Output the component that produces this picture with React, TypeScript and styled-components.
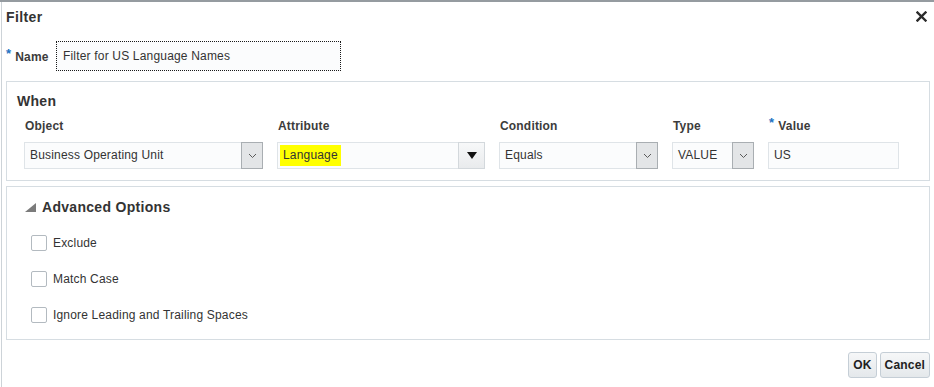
import React from 'react';
import styled, { createGlobalStyle } from 'styled-components';

const Global = createGlobalStyle`
  html, body {
    margin: 0;
    padding: 0;
    background: #ffffff;
  }
  body {
    font-family: "Liberation Sans", Arial, sans-serif;
    font-size: 12px;
    letter-spacing: 0.18px;
    color: #333333;
  }
  * {
    box-sizing: border-box;
  }
`

const Color = {
  Text: '#333333',
  Label: '#3c3c3c',
  Border: '#d6dde2',
  FieldBorder: '#dfe4e8',
  FieldBg: '#fbfcfd',
  Required: '#2372c2',
}

type Column = {
  label: string,
  required?: boolean,
  value: string,
  width: number,
  arrow?: 'chevron' | 'solid' | 'none',
  highlight?: boolean,
}

const columns: Column[] = [
  { label: 'Object', value: 'Business Operating Unit', width: 239, arrow: 'chevron' },
  { label: 'Attribute', value: 'Language', width: 208, arrow: 'solid', highlight: true },
  { label: 'Condition', value: 'Equals', width: 159, arrow: 'chevron' },
  { label: 'Type', value: 'VALUE', width: 82, arrow: 'chevron' },
  { label: 'Value', value: 'US', width: 131, arrow: 'none', required: true },
]

const options = ['Exclude', 'Match Case', 'Ignore Leading and Trailing Spaces']

const Chevron = () => (
  <svg width="9" height="6" viewBox="0 0 9 6">
    <polyline points="1,1 4.5,4.5 8,1" fill="none" stroke="#5a5a5a" strokeWidth="1" />
  </svg>
)

const SolidArrow = () => (
  <svg width="10" height="7" viewBox="0 0 10 7">
    <polygon points="0,0 10,0 5,7" fill="#111111" />
  </svg>
)

const CloseIcon = () => (
  <svg width="11" height="11" viewBox="0 0 11 11">
    <path d="M1.5 1.5 L9.5 9.5 M9.5 1.5 L1.5 9.5" stroke="#2b2b2b" strokeWidth="2.4" strokeLinecap="square" />
  </svg>
)

const Disclosure = () => (
  <svg width="11" height="9" viewBox="0 0 11 9">
    <polygon points="11,0 11,9 0,9" fill="#7b7b7b" />
  </svg>
)

export default () => {
  return (
    <>
      <Global />
      <Dialog>
        <Header>
          <Title>Filter</Title>
          <Close><CloseIcon /></Close>
        </Header>

        <NameRow>
          <FieldLabel><Star>*</Star>Name</FieldLabel>
          <NameInput>Filter for US Language Names</NameInput>
        </NameRow>

        <WhenPanel>
          <PanelTitle>When</PanelTitle>
          <WhenGrid>
            {columns.map(c => (
              <Col key={c.label} style={{ width: c.width }}>
                <ColLabel>
                  {c.required && <Star>*</Star>}
                  {c.label}
                </ColLabel>
                <Select>
                  <SelectText>
                    <Highlight on={!!c.highlight}>{c.value}</Highlight>
                  </SelectText>
                  {c.arrow === 'chevron' && <DropButton><Chevron /></DropButton>}
                  {c.arrow === 'solid' && <SolidButton><SolidArrow /></SolidButton>}
                </Select>
              </Col>
            ))}
          </WhenGrid>
        </WhenPanel>

        <AdvancedPanel>
          <AdvancedHeader>
            <Disclosure />
            <AdvancedTitle>Advanced Options</AdvancedTitle>
          </AdvancedHeader>
          <CheckList>
            {options.map(o => (
              <CheckRow key={o}>
                <Box />
                <span>{o}</span>
              </CheckRow>
            ))}
          </CheckList>
        </AdvancedPanel>

        <Footer>
          <Button>OK</Button>
          <Button>Cancel</Button>
        </Footer>
      </Dialog>
    </>
  )
}

const Dialog = styled.div`
  width: 934px;
  height: 387px;
  border-top: 2px solid #959ba0;
  box-shadow: inset 1px 0 0 #ffffff, inset 2px 0 0 #cdd3d8;
  overflow: hidden;
  display: flex;
  flex-direction: column;
`

const Header = styled.div`
  display: flex;
  align-items: center;
  justify-content: space-between;
  padding: 5px 7px 0 6px;
  height: 27px;
  box-sizing: content-box;
`

const Title = styled.div`
  font-size: 14px;
  font-weight: bold;
  line-height: 16px;
  letter-spacing: 0.4px;
  color: ${Color.Text};
  margin-top: -8px;
`

const Close = styled.div`
  display: flex;
  align-items: center;
  justify-content: center;
  width: 12px;
  height: 12px;
  margin-top: -8px;
`

const NameRow = styled.div`
  display: flex;
  align-items: center;
  margin-top: 7px;
  padding-left: 6px;
  height: 30px;
`

const Star = styled.span`
  color: ${Color.Required};
  font-size: 13px;
  font-weight: bold;
  line-height: 0;
  vertical-align: 3px;
  margin-right: 4px;
`

const FieldLabel = styled.div`
  font-weight: bold;
  font-size: 12px;
  line-height: 14px;
  color: ${Color.Label};
  width: 50px;
  white-space: nowrap;
  margin-top: 1px;
`

const NameInput = styled.div`
  width: 285px;
  height: 30px;
  border: 1px dotted #1a1a1a;
  background: ${Color.FieldBg};
  padding-left: 6px;
  display: flex;
  align-items: center;
  font-size: 12px;
  color: ${Color.Text};
`

const Panel = styled.div`
  margin: 0 4px 0 6px;
  border: 1px solid ${Color.Border};
  background: #ffffff;
`

const WhenPanel = styled(Panel)`
  margin-top: 10px;
  height: 100px;
  padding: 11px 0 0 10px;
`

const PanelTitle = styled.div`
  font-size: 14px;
  font-weight: bold;
  line-height: 17px;
  letter-spacing: 0.3px;
  color: ${Color.Text};
`

const WhenGrid = styled.div`
  display: flex;
  gap: 14px;
  margin: 9px 0 0 7px;
`

const Col = styled.div`
  display: flex;
  flex-direction: column;
  gap: 9px;
`

const ColLabel = styled.div`
  font-weight: bold;
  font-size: 12px;
  line-height: 14px;
  height: 14px;
  padding-left: 1px;
  color: ${Color.Label};
  white-space: nowrap;
`

const Select = styled.div`
  height: 27px;
  display: flex;
  border: 1px solid ${Color.FieldBorder};
  background: ${Color.FieldBg};
`

const SelectText = styled.div`
  flex: 1;
  display: flex;
  align-items: center;
  padding-left: 2px;
  font-size: 12px;
  color: ${Color.Text};
  white-space: nowrap;
  overflow: hidden;
`

const Highlight = styled.span<{ on: boolean }>`
  padding: 3px 3px 4px 3px;
  line-height: 14px;
  background: ${props => props.on ? '#ffff00' : 'transparent'};
`

const DropButton = styled.div`
  width: 22px;
  margin: -1px -1px -1px 0;
  border: 1px solid #a9aeb2;
  background: #e3e5e7;
  display: flex;
  align-items: center;
  justify-content: center;
`

const SolidButton = styled.div`
  width: 27px;
  margin: -1px -1px -1px 0;
  border: 1px solid #d3d8dc;
  background: linear-gradient(#f7f8f9, #e9ebed);
  display: flex;
  align-items: center;
  justify-content: center;
`

const AdvancedPanel = styled(Panel)`
  margin-top: 5px;
  height: 154px;
  padding: 12px 0 0 17px;
`

const AdvancedHeader = styled.div`
  display: flex;
  align-items: center;
  gap: 6px;
  height: 17px;
  margin-left: 1px;
`

const AdvancedTitle = styled.div`
  font-size: 14px;
  font-weight: bold;
  line-height: 17px;
  letter-spacing: 0.3px;
  color: ${Color.Text};
`

const CheckList = styled.div`
  display: flex;
  flex-direction: column;
  gap: 20px;
  margin: 19px 0 0 7px;
`

const CheckRow = styled.div`
  display: flex;
  align-items: center;
  gap: 6px;
  height: 16px;
  font-size: 12px;
  color: ${Color.Text};
`

const Box = styled.div`
  width: 16px;
  height: 16px;
  border: 1px solid #b3bac0;
  border-radius: 2px;
  background: #ffffff;
`

const Footer = styled.div`
  display: flex;
  justify-content: flex-end;
  gap: 3px;
  margin: 12px 4px 0 0;
`

const Button = styled.div`
  height: 26px;
  padding: 0 4px;
  border: 1px solid #c5ced6;
  border-radius: 3px;
  background: linear-gradient(#f6f7f8, #e4e8eb);
  display: flex;
  align-items: center;
  font-weight: bold;
  font-size: 12px;
  color: #222222;
`
